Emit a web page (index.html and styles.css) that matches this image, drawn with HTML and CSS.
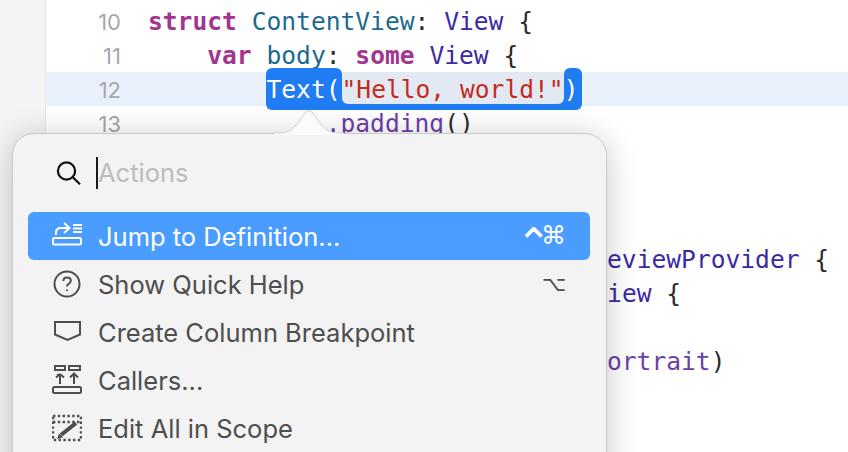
FILE: index.html
```html
<!DOCTYPE html>
<html lang="en">
<head>
<meta charset="utf-8">
<title>Xcode actions popover</title>
<link rel="stylesheet" href="styles.css">
</head>
<body>
<div class="window">
  <div class="sidebar"></div>
  <div class="editor">
    <div class="line"><span class="num">10</span><code class="code"><span class="kw">struct</span> <span class="decl">ContentView</span>: <span class="type">View</span> {</code></div>
    <div class="line"><span class="num">11</span><code class="code">    <span class="kw">var</span> <span class="decl">body</span>: <span class="kw">some</span> <span class="type">View</span> {</code></div>
    <div class="line current"><span class="num">12</span><code class="code">        <span class="sel"><span class="sel-end sel-head">Text(</span><span class="sel-mid"><span class="str">"Hello, world!"</span></span><span class="sel-end sel-tail">)</span></span></code></div>
    <div class="line"><span class="num">13</span><code class="code">            <span class="fn">.padding</span>()</code></div>
    <div class="line"><span class="num">14</span><code class="code">    }</code></div>
    <div class="line"><span class="num">15</span><code class="code">}</code></div>
    <div class="line"><span class="num">16</span><code class="code"></code></div>
    <div class="line"><span class="num">17</span><code class="code"><span class="kw">struct</span> <span class="decl">ContentView_Previews</span>: <span class="type">PreviewProvider</span> {</code></div>
    <div class="line"><span class="num">18</span><code class="code">    <span class="kw">static var</span> <span class="decl">previews</span>: <span class="kw">some</span> <span class="type">View</span> {</code></div>
    <div class="line"><span class="num">19</span><code class="code">        <span class="type">ContentView</span>()</code></div>
    <div class="line"><span class="num">20</span><code class="code"><span class="fn">.previewInterfaceOrientation(.portrait</span>)</code></div>
    <div class="line"><span class="num">21</span><code class="code">    }</code></div>
    <div class="line"><span class="num">22</span><code class="code">}</code></div>
  </div>

  <div class="popover">
    <svg class="beak" viewBox="0 0 70 28" width="70" height="28" aria-hidden="true">
      <path class="beak-fill" d="M0 26 H5 C15 26 19 22 24 16 L32 5 Q35 2 38 5 L46 16 C51 22 55 26 65 26 H70 V28 H0 Z"/>
      <path class="beak-line" d="M0 26 H5 C15 26 19 22 24 16 L32 5 Q35 2 38 5 L46 16 C51 22 55 26 65 26 H70"/>
    </svg>
    <div class="search">
      <svg class="search-icon" viewBox="0 0 30 30" width="30" height="30" aria-hidden="true">
        <circle cx="13.5" cy="13" r="8.6"/>
        <path d="M19.8 19.2 L27 26.2"/>
      </svg>
      <span class="caret"></span>
      <span class="placeholder">Actions</span>
    </div>
    <ul class="menu">
      <li class="item active">
        <svg class="icon" viewBox="0 0 30 30" width="30" height="30" aria-hidden="true">
          <rect x="1" y="17" width="28" height="6.5" rx="1.5"/>
          <path d="M4 14 V11.5 Q4 7 9 7 H17"/>
          <path d="M12 2 L17.5 7 L12 12"/>
          <path d="M21 4 H30 M21 7.5 H30 M21 11 H30"/>
        </svg>
        <span class="label">Jump to Definition...</span>
        <span class="keys"><span class="key-ctrl">⌃</span><span class="key-cmd">⌘</span></span>
      </li>
      <li class="item">
        <svg class="icon" viewBox="0 0 30 30" width="30" height="30" aria-hidden="true">
          <circle cx="15" cy="15" r="12.5"/>
          <path d="M11.3 12 Q11.5 8.6 15 8.6 Q18.8 8.6 18.8 11.8 Q18.8 13.6 16.6 14.8 Q15 15.6 15 17.6"/>
          <path d="M15 20.4 V22"/>
        </svg>
        <span class="label">Show Quick Help</span>
        <span class="keys key-opt">⌥</span>
      </li>
      <li class="item">
        <svg class="icon" viewBox="0 0 30 30" width="30" height="30" aria-hidden="true">
          <path d="M3 5 H28 V17.5 L15.5 23 L3 17.5 Z"/>
        </svg>
        <span class="label">Create Column Breakpoint</span>
      </li>
      <li class="item">
        <svg class="icon" viewBox="0 0 30 30" width="30" height="30" aria-hidden="true">
          <rect x="3" y="1" width="10" height="4"/>
          <rect x="17" y="1" width="11" height="4"/>
          <rect x="1" y="22" width="28" height="6" rx="1.5"/>
          <path d="M8 19 V11 Q8 9 5 10 M8 9 L12 12.5 M8 9 L4 12.5"/>
          <path d="M22 19 V9 M18 12.5 L22 8.5 L26 12.5"/>
        </svg>
        <span class="label">Callers...</span>
      </li>
      <li class="item">
        <svg class="icon" viewBox="0 0 30 30" width="30" height="30" aria-hidden="true">
          <rect class="dots" x="1" y="3" width="28" height="24"/>
          <path class="dots" d="M1 9 H29"/>
          <path class="pen" d="M9 22 L24 10"/>
          <path class="tip" d="M5 26 L7 20.5 L11 24.5 Z"/>
        </svg>
        <span class="label">Edit All in Scope</span>
      </li>
    </ul>
  </div>
</div>
</body>
</html>
```
FILE: styles.css
```css
html, body {
  margin: 0;
  padding: 0;
  background: #fff;
}

.window {
  position: relative;
  display: flex;
  width: 848px;
  height: 452px;
  overflow: hidden;
  background: #fff;
}

.sidebar {
  flex: 0 0 45px;
  background: #f4f4f4;
  border-right: 1px solid #e4e4e4;
}

.editor {
  flex: 1;
  min-width: 0;
  padding-top: 4px;
}

.line {
  display: flex;
  height: 34px;
}

.line.current {
  background: #e9f2fc;
}

.num {
  flex: 0 0 75px;
  padding-top: 1px;
  text-align: right;
  font: 22px/34px "Inter", "Liberation Sans", sans-serif;
  color: #a8a8a8;
}

.code {
  margin-left: 27px;
  padding-top: 1px;
  white-space: pre;
  font-family: "DejaVu Sans Mono", monospace;
  font-size: 24.6px;
  line-height: 34px;
  color: #2b2b2b;
}

.kw { color: #a2358f; font-weight: 700; }
.decl { color: #1c6a8e; }
.type { color: #3b2aa3; }
.fn { color: #6c3fa8; }

.sel {
  display: inline-flex;
  margin: -5px 0 -3px;
  color: #fff;
}

.sel-end {
  padding: 5px 0 3px;
  background: #1f7cf2;
}

.sel-head { padding-right: 1px; border-radius: 6px 6px 0 6px; }
.sel-tail { border-radius: 6px 6px 6px 0; width: 18px; margin-right: -3px; }

.sel-mid {
  padding: 4px 0 6px;
  background: linear-gradient(to bottom, transparent 50%, #1f7cf2 50%);
}

.str {
  display: block;
  height: 31px;
  padding-top: 1px;
  background: #e3e9f3;
  border-radius: 0 0 6px 6px;
  color: #c42b1c;
}

.popover {
  position: absolute;
  left: 12px;
  top: 133px;
  width: 595px;
  height: 420px;
  box-sizing: border-box;
  padding: 0 16px 0 15px;
  background: #f3f3f3;
  border: 1px solid #c9c9c9;
  border-radius: 22px;
  box-shadow: 0 4px 32px rgba(0, 0, 0, 0.22);
  font-family: "Inter", "Liberation Sans", sans-serif;
}

.beak {
  position: absolute;
  left: 261px;
  top: -27px;
  display: block;
}

.beak-fill { fill: #fbfbfb; }
.beak-line { fill: none; stroke: #cfcfcf; stroke-width: 1; }

.search {
  display: flex;
  align-items: center;
  height: 78px;
  padding-left: 25px;
}

.search-icon {
  flex: none;
  fill: none;
  stroke: #111;
  stroke-width: 2.2;
}

.caret {
  flex: none;
  width: 2px;
  height: 32px;
  margin-left: 13px;
  background: #1a1a1a;
}

.placeholder {
  padding-bottom: 2px;
  font-size: 25.5px;
  color: #bcbcbc;
}

.menu {
  margin: 0;
  padding: 0;
  list-style: none;
}

.item {
  display: flex;
  align-items: center;
  height: 48px;
  padding: 0 24px;
  border-radius: 6px;
  color: #4e4e4e;
}

.item.active {
  background: #4a9dff;
  color: #fff;
}

.icon {
  flex: none;
  fill: none;
  stroke: currentColor;
  stroke-width: 2;
  margin-right: 16px;
}

.dots {
  stroke-width: 2.4;
  stroke-dasharray: 2.4 2.4;
}

.pen { stroke-width: 4; }
.tip { fill: currentColor; stroke: none; }

.label {
  flex: 1;
  padding-top: 1px;
  font-size: 25.5px;
  white-space: nowrap;
}

.keys {
  flex: none;
  display: flex;
  align-items: center;
  font-family: "DejaVu Sans", sans-serif;
}

.key-ctrl {
  margin-right: 3px;
  padding-top: 16px;
  font-size: 42px;
  font-weight: 400;
  line-height: 32px;
  width: 22px;
  text-align: center;
}

.key-cmd {
  font-size: 25px;
  font-weight: 400;
  line-height: 32px;
}

.key-opt {
  font-size: 21px;
  line-height: 32px;
}
```
